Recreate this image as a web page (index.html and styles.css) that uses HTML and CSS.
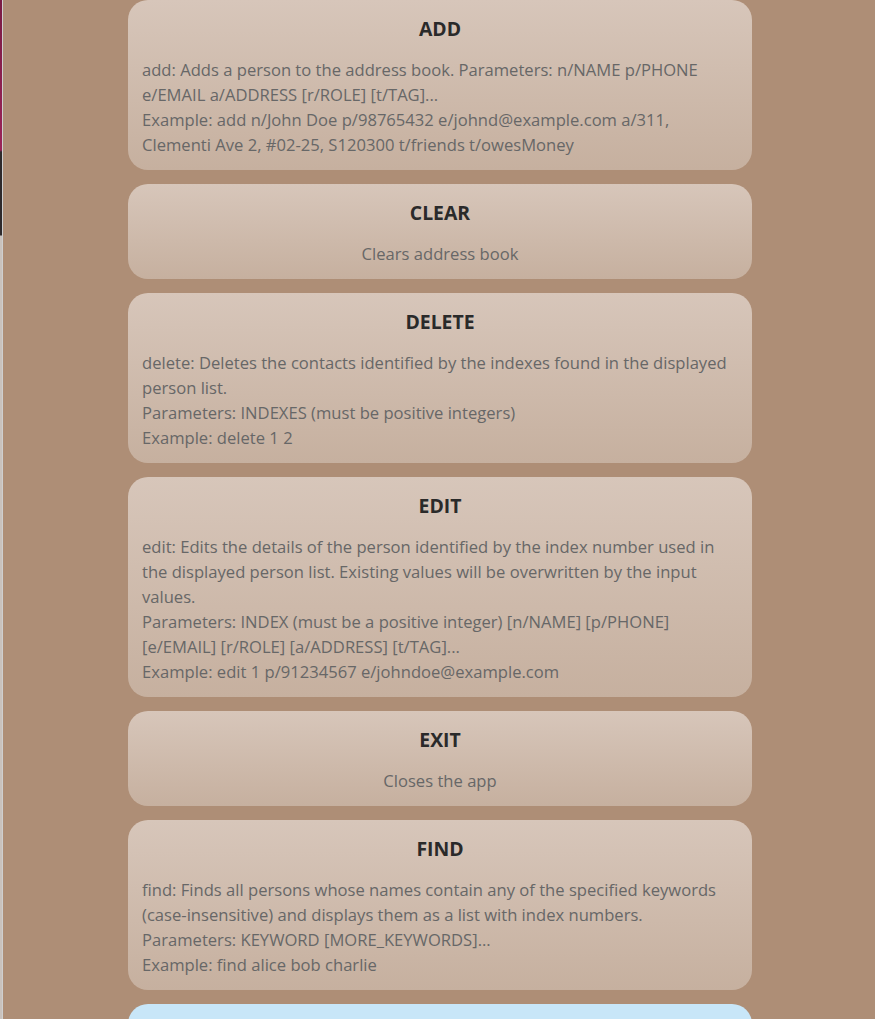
FILE: index.html
```html
<!DOCTYPE html>
<html>
<head>
<meta charset="utf-8">
<link rel="stylesheet" href="styles.css">
</head>
<body>
<div class="page">
  <div class="edge"></div>
  <main class="list">
    <section class="card">
      <h2 class="title">ADD</h2>
      <p class="desc left">add: Adds a person to the address book. Parameters: n/NAME p/PHONE e/EMAIL a/ADDRESS [r/ROLE] [t/TAG]...<br>Example: add n/John Doe p/98765432 e/johnd@example.com a/311, Clementi Ave 2, #02-25, S120300 t/friends t/owesMoney</p>
    </section>
    <section class="card">
      <h2 class="title">CLEAR</h2>
      <p class="desc center">Clears address book</p>
    </section>
    <section class="card">
      <h2 class="title">DELETE</h2>
      <p class="desc left">delete: Deletes the contacts identified by the indexes found in the displayed person list.<br>Parameters: INDEXES (must be positive integers)<br>Example: delete 1 2</p>
    </section>
    <section class="card">
      <h2 class="title">EDIT</h2>
      <p class="desc left">edit: Edits the details of the person identified by the index number used in the displayed person list. Existing values will be overwritten by the input values.<br>Parameters: INDEX (must be a positive integer) [n/NAME] [p/PHONE] [e/EMAIL] [r/ROLE] [a/ADDRESS] [t/TAG]...<br>Example: edit 1 p/91234567 e/johndoe@example.com</p>
    </section>
    <section class="card">
      <h2 class="title">EXIT</h2>
      <p class="desc center">Closes the app</p>
    </section>
    <section class="card">
      <h2 class="title">FIND</h2>
      <p class="desc left">find: Finds all persons whose names contain any of the specified keywords (case-insensitive) and displays them as a list with index numbers.<br>Parameters: KEYWORD [MORE_KEYWORDS]...<br>Example: find alice bob charlie</p>
    </section>
    <section class="card card-blue"></section>
  </main>
</div>
</body>
</html>
```
FILE: styles.css
```css
html, body {
  margin: 0;
  padding: 0;
  background: #ae8e76;
  overflow: hidden;
  height: 1019px;
}

.page {
  display: flex;
  align-items: stretch;
  min-height: 1019px;
}

.edge {
  flex: 0 0 2px;
  background: linear-gradient(to bottom, #7a1c44 0, #9a2458 150px, #2e2a2c 152px, #2e2a2c 235px, #c9c2bd 236px, #c9c2bd 100%);
  border-right: 1px solid #cfcfcf;
}

.list {
  width: 624px;
  margin-left: 125px;
  display: flex;
  flex-direction: column;
  gap: 14px;
  font-family: "Open Sans", "Noto Sans", sans-serif;
}

.card {
  border-radius: 20px;
  background: linear-gradient(to bottom, #d7c6ba, #c6b09f);
  padding: 12px 14px 13px;
}

.card-blue {
  background: #c8e6f8;
  min-height: 60px;
}

.title {
  margin: 0;
  text-align: center;
  font-size: 19.4px;
  font-weight: 700;
  line-height: 34px;
  color: #2a2a2a;
}

.desc {
  margin: 11px 0 0;
  font-size: 16.6px;
  line-height: 25px;
  color: #676767;
}

.left { text-align: left; }
.center { text-align: center; }
```
